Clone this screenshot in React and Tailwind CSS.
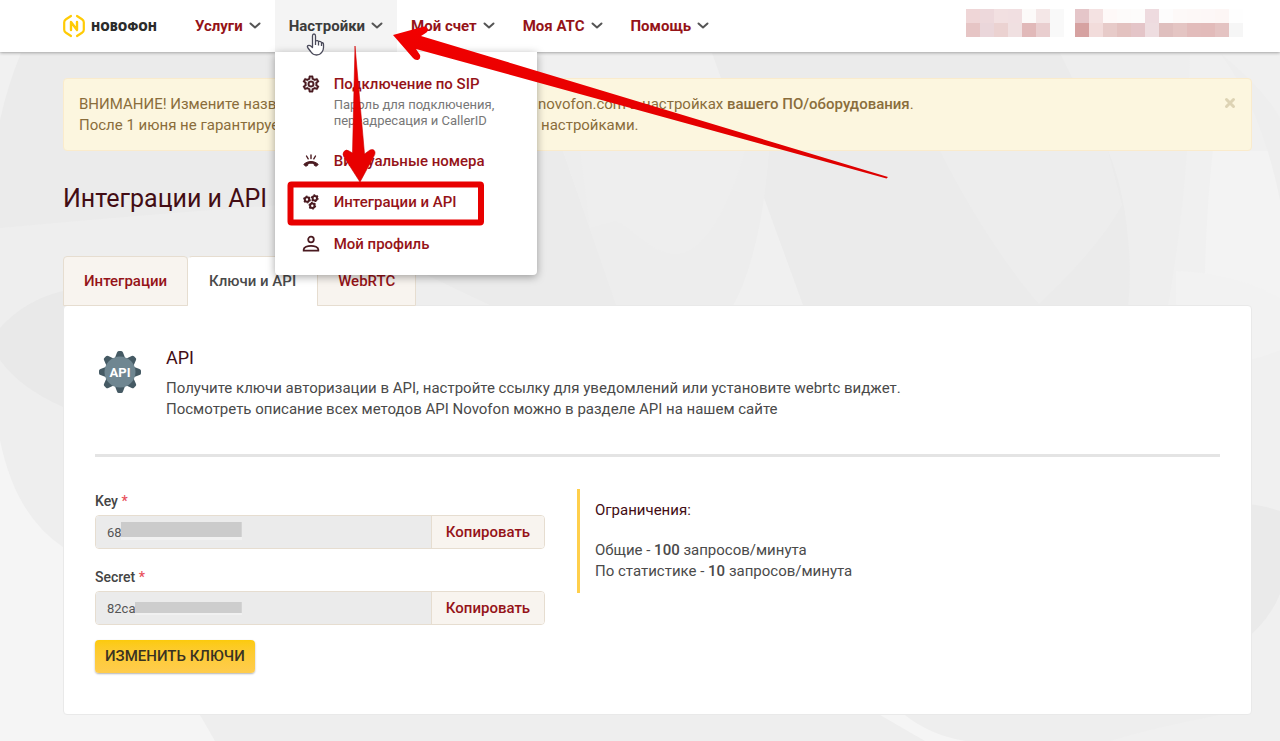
import { useState } from "react";

/* Страница «Интеграции и API» личного кабинета: шапка с меню, уведомление, вкладки, ключи */

const NAV = ["Услуги", "Настройки", "Мой счет", "Моя АТС", "Помощь"];

const TABS = ["Интеграции", "Ключи и API", "WebRTC"];

const MASK_A = [
  ["#efd6d7", "#edd8db", "#f2e0e1", "#f1dfe1", "#fcfaf9", "#f4e7e7", "#f9f9f9"],
  ["#e6c5c5", "#ead6da", "#ebd2d1", "#f0e0e1", "#e1b9b9", "#e9cecf", "#f9f9f9"],
];
const MASK_B = [
  ["#e5c6c9", "#f4e2e2", "#fef9f8", "#fdfbfa", "#fdfcfb", "#eedbdf", "#fdfcfc", "#fdf9f8", "#fdf8f7", "#fdf7f7", "#fdf6f5", "#fefefe"],
  ["#d6a2a1", "#f2dcdb", "#e7cbc9", "#e3c2c0", "#e4c5c8", "#eedde0", "#dfbfbe", "#e4c5c3", "#e2bcbb", "#e2bbba", "#e4c3c2", "#f6f6f6"],
];

function Mosaic({ rows }) {
  return (
    <div aria-hidden="true">
      {rows.map((row, i) => (
        <div key={i} className="flex">
          {row.map((color, j) => (
            <span key={j} className="h-[14px] w-[14px]" style={{ background: color }} />
          ))}
        </div>
      ))}
    </div>
  );
}

function Backdrop() {
  return (
    <svg
      viewBox="0 0 1280 741"
      preserveAspectRatio="xMidYMid slice"
      className="absolute inset-0 -z-10 h-full w-full"
      aria-hidden="true"
    >
      <rect width="1280" height="741" fill="#ebebeb" />
      <path d="M0 228Q150 214 280 205L500 310H0Z" fill="#eeeeee" />
      <rect y="300" width="280" height="441" fill="#eeeeee" />
      <path d="M0 53H21Q8 84 0 120Z" fill="#f1f1f1" />
      <path d="M0 328Q25 300 63 291L200 280V420L63 407Q20 388 0 360Z" fill="#e9e9e9" />
      <path d="M0 440Q15 515 63 547Q190 640 215 741H0Z" fill="#f5f5f5" />
      <path d="M563 151L641 374H828L747 151L712 53H530Z" fill="#f0f0f0" />
      <path d="M563 151H769C762 250 735 352 670 352C648 352 636 345 627 337Z" fill="#ededed" />
      <path d="M580 151H745C730 205 705 254 676 254C650 254 630 225 615 221L590 228Z" fill="#eeeeee" />
      <path d="M940 151C970 210 1005 265 1039 304C1080 265 1105 235 1122 205L1108 151Z" fill="#ededed" />
      <path d="M1108 151C1132 205 1140 310 1112 374H1280V53H1060Z" fill="#eeeeee" />
      <path d="M1187 151C1182 230 1168 310 1156 374H1280V53H1190Z" fill="#f0f0f0" />
      <path d="M1213 151C1205 220 1203 300 1206 374H1280V151Z" fill="#f3f3f3" />
      <path d="M1220 53Q1265 90 1280 118V200Q1262 110 1220 53Z" fill="#eeeeee" />
      <path d="M1176 271Q1235 273 1280 298V741H1180Z" fill="#f2f2f2" />
      <path d="M1240 362Q1262 358 1280 350V741H1240Z" fill="#f0f0f0" />
      <path d="M1240 504Q1260 504 1280 511V594Q1270 620 1240 645Z" fill="#eaeaea" />
      <path d="M200 715H1280V741H215Z" fill="#eeeeee" />
      <path d="M880 715H905Q930 735 965 741H925Z" fill="#f5f5f5" />
      <path d="M1110 741Q1180 720 1280 705V741Z" fill="#f0f0f0" />
    </svg>
  );
}

function Logo() {
  return (
    <a href="#home" className="flex items-center gap-[6px]">
      <svg width="22" height="24" viewBox="0 0 22 24" fill="none" aria-hidden="true">
        <path
          d="M8 2L3 5.200Q1.200 6.300 1.200 8.300V15.700Q1.200 17.700 3 18.800L8 22M14 2L19 5.200Q20.800 6.300 20.800 8.300V15.700Q20.800 17.700 19 18.800L14 22"
          stroke="#ffcb05"
          strokeWidth="2.200"
          strokeLinecap="round"
        />
        <path d="M8 16V8L14 16V8" stroke="#ffcb05" strokeWidth="2.400" strokeLinejoin="round" strokeLinecap="round" />
      </svg>
      <span className="font-['Open_Sans',sans-serif] text-[12px] font-extrabold text-[#2b2b2b]">НОВОФОН</span>
    </a>
  );
}

function Chevron() {
  return (
    <svg width="12" height="8" viewBox="0 0 12 8" fill="none" stroke="#555" strokeWidth="2" strokeLinecap="round" strokeLinejoin="round" aria-hidden="true">
      <path d="M1.500 1.500L6 5.500L10.500 1.500" />
    </svg>
  );
}

function GearIcon() {
  return (
    <svg width="20" height="20" viewBox="0 0 24 24" fill="#4a1a20" stroke="#4a1a20" strokeWidth="0.400" aria-hidden="true">
      <path d="M19.430 12.980c.040-.320.070-.640.070-.980s-.030-.660-.070-.980l2.110-1.650c.190-.150.240-.420.120-.640l-2-3.460a.5.5 0 0 0-.610-.220l-2.490 1c-.520-.400-1.080-.730-1.690-.980l-.380-2.650A.488.488 0 0 0 14 2h-4c-.250 0-.460.180-.490.420l-.380 2.650c-.610.250-1.170.590-1.690.980l-2.490-1a.5.5 0 0 0-.610.220l-2 3.460c-.130.220-.070.490.120.640l2.110 1.650c-.040.320-.070.650-.070.980s.030.660.070.980l-2.110 1.650c-.190.150-.240.420-.120.640l2 3.460c.120.220.390.300.610.220l2.490-1c.520.400 1.080.730 1.690.980l.380 2.650c.030.240.240.420.490.420h4c.250 0 .460-.180.490-.420l.380-2.650c.610-.250 1.170-.590 1.690-.980l2.490 1c.230.090.490 0 .610-.220l2-3.460c.120-.220.070-.490-.120-.640zm-1.980-1.710c.040.310.050.520.050.730s-.020.430-.050.730l-.140 1.130.890.700 1.080.840-.700 1.210-1.270-.510-1.040-.420-.900.680c-.430.320-.840.560-1.250.730l-1.060.430-.160 1.130-.200 1.350h-1.400l-.190-1.350-.160-1.130-1.060-.430c-.430-.180-.830-.410-1.230-.710l-.910-.700-1.060.430-1.270.510-.700-1.210 1.080-.840.890-.700-.140-1.130c-.030-.310-.050-.540-.050-.740s.020-.430.050-.730l.140-1.130-.890-.700-1.080-.840.700-1.210 1.270.510 1.040.420.900-.680c.430-.320.840-.560 1.250-.730l1.060-.430.160-1.130.200-1.350h1.390l.190 1.350.160 1.130 1.060.430c.430.180.830.410 1.230.710l.910.700 1.060-.430 1.270-.510.700 1.210-1.070.850-.890.700zM12 8a4 4 0 1 0 0 8 4 4 0 0 0 0-8m0 6a2 2 0 1 1 0-4 2 2 0 0 1 0 4" />
    </svg>
  );
}

function RingIcon() {
  return (
    <svg width="20" height="20" viewBox="0 0 20 20" aria-hidden="true">
      <path
        d="M10 10.500C7 10.500 4.500 11.700 2.800 13.400L4.700 15.300C5.300 14.900 6 14.500 6.800 14.200V12.700C8.800 12 11.200 12 13.200 12.700V14.200C14 14.500 14.700 14.900 15.300 15.300L17.200 13.400C15.500 11.700 13 10.500 10 10.500Z"
        fill="#4a1a20"
        stroke="#4a1a20"
        strokeLinejoin="round"
      />
      <path d="M10 4V7.500M5.500 5L7.200 7.800M14.500 5L12.800 7.800" stroke="#4a1a20" strokeWidth="1.400" strokeLinecap="round" />
    </svg>
  );
}

function Cog({ x, y }) {
  return (
    <g transform={`translate(${x} ${y})`}>
      <circle r="2.200" fill="none" stroke="#4a1a20" strokeWidth="2" />
      <circle r="3.300" fill="none" stroke="#4a1a20" strokeWidth="1.200" strokeDasharray="1.700 1.755" />
    </g>
  );
}

function CogsIcon() {
  return (
    <svg width="20" height="20" viewBox="0 0 20 20" aria-hidden="true">
      <Cog x={6} y={7.5} />
      <Cog x={13.8} y={6.2} />
      <Cog x={11.3} y={13.7} />
    </svg>
  );
}

function PersonIcon() {
  return (
    <svg width="20" height="20" viewBox="0 0 20 20" fill="none" stroke="#4a1a20" strokeWidth="1.800" aria-hidden="true">
      <circle cx="10" cy="5.500" r="2.800" />
      <path d="M2.700 16.600V15.600C2.700 13.200 6.500 11.800 10 11.800S17.300 13.200 17.300 15.600V16.600Z" />
    </svg>
  );
}

function ApiGear() {
  return (
    <svg width="44" height="44" viewBox="0 0 44 44" aria-hidden="true">
      <g fill="#455a64">
        {[0, 45, 90, 135, 180, 225, 270, 315].map((deg) => (
          <path key={deg} d="M16.500 9L19 2.500Q19.400 1 20.800 1H23.200Q24.600 1 25 2.500L27.500 9Z" transform={`rotate(${deg} 22 22)`} />
        ))}
      </g>
      <circle cx="22" cy="22" r="15.500" fill="#6f8691" />
      <text x="22" y="27" textAnchor="middle" fontSize="13" fontWeight="700" fill="#fff">
        API
      </text>
    </svg>
  );
}

function SettingsMenu() {
  const link = "flex items-center gap-[13px] text-[15px] leading-[20px] font-medium text-[#951318]";
  return (
    <div className="absolute top-full left-0 w-[262px] rounded-b bg-white px-[26px] pt-[22px] pb-[21px] shadow-[0_2px_8px_rgba(0,0,0,0.35)]">
      <a href="#sip" className="flex gap-[13px]">
        <GearIcon />
        <span>
          <span className="block text-[15px] leading-[20px] font-medium text-[#951318]">Подключение по SIP</span>
          <span className="block pt-[3px] text-[13px] leading-[16px] whitespace-nowrap text-[#777]">
            Пароль для подключения,
            <br />
            переадресация и CallerID
          </span>
        </span>
      </a>
      <a href="#numbers" className={`mt-[22px] ${link}`}>
        <RingIcon />
        Виртуальные номера
      </a>
      <a href="#integrations" className={`mt-[21px] ${link}`}>
        <CogsIcon />
        Интеграции и API
      </a>
      <a href="#profile" className={`mt-[22px] ${link}`}>
        <PersonIcon />
        Мой профиль
      </a>
    </div>
  );
}

function Header() {
  return (
    <header className="relative z-10 flex h-[52px] items-center bg-white pr-[37px] pl-[63px] shadow-[0_1px_3px_rgba(0,0,0,0.3)]">
      <div className="w-[118px] shrink-0">
        <Logo />
      </div>
      <nav className="flex h-full">
        {NAV.map((item) => {
          const open = item === "Настройки";
          return (
            <div key={item} className={`relative h-full ${open ? "bg-[#f4f4f4]" : ""}`}>
              <button
                type="button"
                aria-expanded={open}
                className={`flex h-full items-center gap-[6px] px-[14px] text-[15px] font-bold whitespace-nowrap ${open ? "text-[#3c3c3c]" : "text-[#951318]"}`}
              >
                {item}
                <Chevron />
              </button>
              {open && <SettingsMenu />}
            </div>
          );
        })}
      </nav>
      <div className="ml-auto flex gap-[11px] pb-[7px]">
        <Mosaic rows={MASK_A} />
        <Mosaic rows={MASK_B} />
      </div>
    </header>
  );
}

function Notice() {
  return (
    <div role="alert" className="flex justify-between rounded border border-[#faebcc] bg-[#fcf6df] px-[15px] pt-[15px] pb-[14px] leading-[21px] text-[#8a6d3b]">
      <div>
        <p>
          <span className="inline-block w-[459px]">ВНИМАНИЕ! Измените название</span>
          novofon.com в настройках <b className="font-medium">вашего ПО/оборудования</b>.
        </p>
        <p>
          <span className="inline-block w-[462px]">После 1 июня не гарантируется</span>
          настройками.
        </p>
      </div>
      <button type="button" aria-label="Закрыть" className="flex h-[18px] items-center">
        <svg width="12" height="12" viewBox="0 0 12 12" stroke="#ddd3b4" strokeWidth="3" strokeLinecap="round" aria-hidden="true">
          <path d="M2.500 2.500L9.500 9.500M9.500 2.500L2.500 9.500" />
        </svg>
      </button>
    </div>
  );
}

function KeyField({ id, label, value, mask }) {
  return (
    <div>
      <label htmlFor={id} className="block text-[14px] leading-[20px] font-medium text-[#444]">
        {label} <span className="text-[#e8505b]">*</span>
      </label>
      <div className="relative mt-1 flex h-[34px] overflow-hidden rounded border border-[#e6ddd0]">
        <input id={id} readOnly defaultValue={value} className="min-w-0 flex-1 bg-[#ebebeb] px-[11px] text-[13px] text-[#555] outline-none" />
        <span className={mask} />
        <button type="button" className="w-[113px] border-l border-[#e6ddd0] bg-[#f8f4ef] text-[15px] font-medium text-[#951318]">
          Копировать
        </button>
      </div>
    </div>
  );
}

/* Поясняющие стрелки, рамка и курсор поверх страницы */
function Annotations() {
  return (
    <svg width="900" height="240" viewBox="0 0 900 240" className="pointer-events-none absolute top-0 left-0 z-20" aria-hidden="true">
      <defs>
        <linearGradient id="redShade" x1="0" y1="0" x2="0" y2="1">
          <stop offset="0" stopColor="#f20000" />
          <stop offset="1" stopColor="#dd0000" />
        </linearGradient>
      </defs>
      <path
        d="M312.500 47V36Q312.500 34 314 34T315.500 36V41Q318 40 318.500 41.500Q321 41 321.500 42.500Q323.500 42.500 323.500 44.500V47.500Q323.500 50 322 52Q320 55 316.500 55T311 52L308 48Q306.500 46 308.500 45.500Q310 45 312.500 47.500ZM315.500 40V45M318.500 41V45.500M321.500 42.500V46"
        fill="#fff"
        stroke="#4a4a5a"
        strokeWidth="1.300"
        strokeLinejoin="round"
      />
      <path
        d="M355 46L364.500 154L370 150Q374 148.500 375 152Q375.500 154 373.500 157L360 182L344 157Q342 154 344 151.500Q346.500 149 349 151L352.500 153Z"
        fill="#e80000"
        stroke="#d00000"
        strokeWidth="0.600"
        strokeLinejoin="round"
      />
      <path
        d="M393 35L424 26.500Q427.500 26.500 428 30Q427.500 32.500 425 33.500L421 36L888 177L886.500 178.500L416 49L420 55Q421 58.500 418 60Q415 60.500 413 58Z"
        fill="url(#redShade)"
      />
      <rect x="290.500" y="184.500" width="190.500" height="38" rx="1" fill="none" stroke="#e80000" strokeWidth="6" strokeLinejoin="round" />
    </svg>
  );
}

export default function App() {
  const [active, setActive] = useState("Ключи и API");

  return (
    <div className="relative isolate min-h-screen overflow-hidden font-[Roboto,sans-serif] text-[15px] leading-[21px] text-[#4a4a4a]">
      <Backdrop />
      <Header />
      <main className="pt-[26px] pr-[28px] pb-[26px] pl-[63px]">
        <Notice />
        <h1 className="mt-8 text-[25px] leading-[32px] text-[#430d14]">Интеграции и API</h1>

        <div role="tablist" className="relative mt-[41px] flex">
          {TABS.map((tab) => (
            <button
              key={tab}
              type="button"
              role="tab"
              aria-selected={tab === active}
              onClick={() => setActive(tab)}
              className={`h-[50px] rounded-t border px-[20px] text-[15px] font-medium ${
                tab === active
                  ? "border-[#e6ddd0] border-x-white border-b-white bg-white text-[#4a4a4a]"
                  : "border-[#e6ddd0] bg-[#f8f4ef] text-[#951318]"
              }`}
            >
              {tab}
            </button>
          ))}
        </div>

        <section className="-mt-px rounded border border-[#e9e9e9] bg-white px-[31px] pt-[42px] pb-[41px]">
          <div className="flex gap-[24px]">
            <div className="pt-[2px] pl-[3px]">
              <ApiGear />
            </div>
            <div>
              <h2 className="text-[18px] leading-[20px] text-[#430d14]">API</h2>
              <p className="mt-[10px]">
                Получите ключи авторизации в API, настройте ссылку для уведомлений или установите webrtc виджет.
                <br />
                Посмотреть описание всех методов API Novofon можно в разделе API на нашем сайте
              </p>
            </div>
          </div>

          <hr className="mt-[34px] border-0 border-t-[3px] border-[#e4e4e4]" />

          <div className="mt-[32px] flex items-start gap-[32px]">
            <form className="w-2/5 shrink-0 pt-[2px]" onSubmit={(e) => e.preventDefault()}>
              <KeyField
                id="api-key"
                label="Key"
                value="68"
                mask="absolute top-[6px] left-[25px] h-[15px] w-[121px] border-r border-[#d4d4d4] bg-[#cbcbcb] shadow-[0_3px_0_#f1f1f1]"
              />
              <div className="mt-[18px]">
                <KeyField
                  id="api-secret"
                  label="Secret"
                  value="82ca"
                  mask="absolute top-[10px] left-[39px] h-[11px] w-[107px] border-r border-[#d4d4d4] bg-[#cdcdcd] shadow-[0_2px_0_#f1f1f1]"
                />
              </div>
              <button
                type="submit"
                className="mt-[15px] h-[33px] rounded-sm bg-linear-to-b from-[#fcca0b] to-[#ffcc4d] px-[10px] text-[15px] font-medium text-[#3a3322] shadow-[0_1px_2px_rgba(0,0,0,0.3)]"
              >
                ИЗМЕНИТЬ КЛЮЧИ
              </button>
            </form>
            <aside className="border-l-[3px] border-[#ffcf4b] py-[11px] pl-[15px]">
              <h3 className="text-[#430d14]">Ограничения:</h3>
              <p className="mt-[19px]">
                Общие - <b className="font-medium">100</b> запросов/минута
                <br />
                По статистике - <b className="font-medium">10</b> запросов/минута
              </p>
            </aside>
          </div>
        </section>
      </main>
      <Annotations />
    </div>
  );
}
